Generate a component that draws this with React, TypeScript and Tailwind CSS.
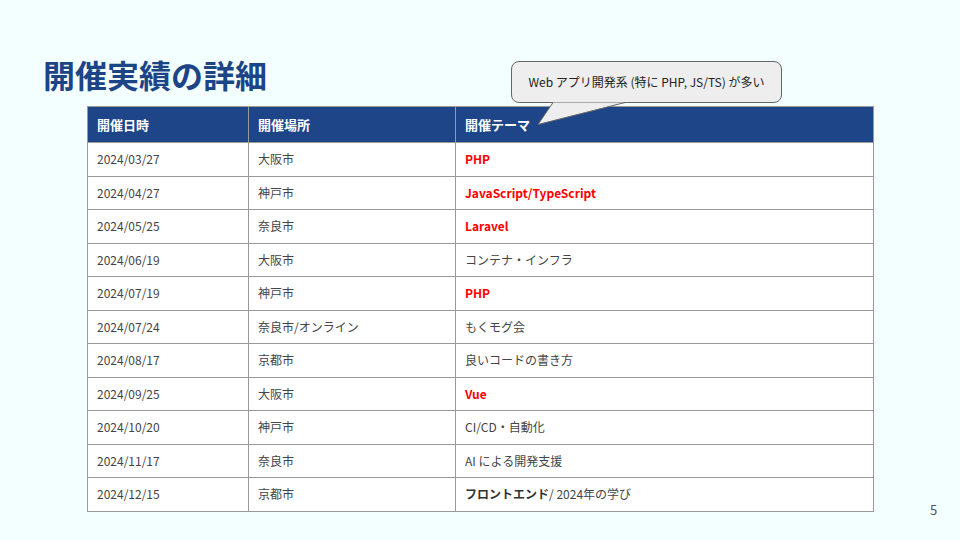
const rows: { date: string; place: string; theme: React.ReactNode }[] = [
  { date: "2024/03/27", place: "大阪市", theme: <span className="font-bold text-[#ff0000]">PHP</span> },
  {
    date: "2024/04/27",
    place: "神戸市",
    theme: <span className="font-bold text-[#ff0000]">JavaScript/TypeScript</span>,
  },
  { date: "2024/05/25", place: "奈良市", theme: <span className="font-bold text-[#ff0000]">Laravel</span> },
  { date: "2024/06/19", place: "大阪市", theme: "コンテナ・インフラ" },
  { date: "2024/07/19", place: "神戸市", theme: <span className="font-bold text-[#ff0000]">PHP</span> },
  { date: "2024/07/24", place: "奈良市/オンライン", theme: "もくモグ会" },
  { date: "2024/08/17", place: "京都市", theme: "良いコードの書き方" },
  { date: "2024/09/25", place: "大阪市", theme: <span className="font-bold text-[#ff0000]">Vue</span> },
  { date: "2024/10/20", place: "神戸市", theme: "CI/CD・自動化" },
  { date: "2024/11/17", place: "奈良市", theme: "AI による開発支援" },
  {
    date: "2024/12/15",
    place: "京都市",
    theme: (
      <>
        <span className="font-bold text-[#333]">フロントエンド</span>/ 2024年の学び
      </>
    ),
  },
];

export default function App() {
  return (
    <div className="relative h-[540px] w-[960px] overflow-hidden bg-[#f3feff] font-['Noto_Sans_CJK_JP','Noto_Sans',sans-serif]">
      <h1 className="pl-[43px] pt-[58px] text-[32px] font-bold leading-[32px] text-[#1d4486]">
        開催実績の詳細
      </h1>

      <table className="ml-[87px] mt-[16px] w-[787px] table-fixed border-collapse text-[12px]">
        <colgroup>
          <col className="w-[161px]" />
          <col className="w-[207px]" />
          <col />
        </colgroup>
        <thead>
          <tr className="h-[36px] bg-[#1d4587] text-left text-[13px] font-bold text-white">
            <th className="border border-[#999] px-[9px]">開催日時</th>
            <th className="border border-[#999] px-[9px]">開催場所</th>
            <th className="border border-[#999] px-[9px]">開催テーマ</th>
          </tr>
        </thead>
        <tbody className="bg-white text-[#444]">
          {rows.map((r) => (
            <tr key={r.date} className="h-[33.5px]">
              <td className="border border-[#999] px-[9px]">{r.date}</td>
              <td className="border border-[#999] px-[9px]">{r.place}</td>
              <td className="border border-[#999] px-[9px]">{r.theme}</td>
            </tr>
          ))}
        </tbody>
      </table>

      {/* callout */}
      <div className="absolute left-[511px] top-[61px] flex h-[42px] w-[271px] items-center justify-center rounded-[8px] border border-[#666] bg-[#eeeeee] text-[12px] text-[#222]">
        Web アプリ開発系 (特に PHP, JS/TS) が多い
      </div>
      <svg className="absolute left-[530px] top-[100px]" width="110" height="30" viewBox="530 100 110 30">
        <polygon points="553,102.5 625,102.5 538,124.5" fill="#eeeeee" />
        <polyline points="553,102.5 538,124.5 625,102.5" fill="none" stroke="#666" strokeWidth="1" />
      </svg>

      <div className="absolute left-[930px] top-[500px] text-[13px] text-[#555]">5</div>
    </div>
  );
}
